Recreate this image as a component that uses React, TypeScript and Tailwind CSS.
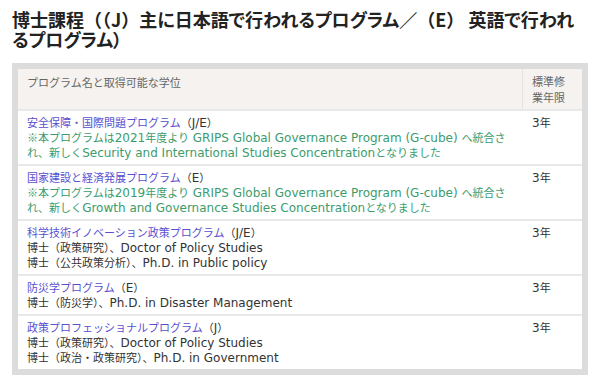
import React from 'react';

type Row = {
  name: string;
  tag: string;
  note?: string;
  degrees?: string[];
  years: string;
};

const rows: Row[] = [
  {
    name: '安全保障・国際問題プログラム',
    tag: '（J/E）',
    note: '※本プログラムは2021年度より GRIPS Global Governance Program (G-cube) へ統合され、新しくSecurity and International Studies Concentrationとなりました',
    years: '3年',
  },
  {
    name: '国家建設と経済発展プログラム',
    tag: '（E）',
    note: '※本プログラムは2019年度より GRIPS Global Governance Program (G-cube) へ統合され、新しくGrowth and Governance Studies Concentrationとなりました',
    years: '3年',
  },
  {
    name: '科学技術イノベーション政策プログラム',
    tag: '（J/E）',
    degrees: ['博士（政策研究）、Doctor of Policy Studies', '博士（公共政策分析）、Ph.D. in Public policy'],
    years: '3年',
  },
  {
    name: '防災学プログラム',
    tag: '（E）',
    degrees: ['博士（防災学）、Ph.D. in Disaster Management'],
    years: '3年',
  },
  {
    name: '政策プロフェッショナルプログラム',
    tag: '（J）',
    degrees: ['博士（政策研究）、Doctor of Policy Studies', '博士（政治・政策研究）、Ph.D. in Government'],
    years: '3年',
  },
];

// latin runs render a touch larger than the kana/kanji, like the original page
const Mixed: React.FC<{ text: string }> = ({ text }) => {
  const parts = text.split(/([\x20-\x7E]+)/).filter(Boolean);
  return (
    <>
      {parts.map((p, i) =>
        /^[\x20-\x7E]+$/.test(p) ? (
          <span key={i} className="[font-family:'DejaVu_Sans',sans-serif] text-[12px] leading-[13px]">
            {p}
          </span>
        ) : (
          <React.Fragment key={i}>{p}</React.Fragment>
        )
      )}
    </>
  );
};

const App: React.FC = () => {
  return (
    <div className="w-[600px] h-[382px] bg-white px-3 pt-[9px] [font-family:'Noto_Sans_CJK_JP',sans-serif] text-[#333]">
      <h1 className="text-[18px] leading-[20px] font-bold text-[#222] [font-feature-settings:'palt']">
        博士課程<span className="[font-feature-settings:normal]">（（</span>J
        <span className="[font-feature-settings:normal]">）</span>主に日本語で行われるプログラム
        <span className="[font-feature-settings:normal]">／（</span>E
        <span className="[font-feature-settings:normal]">）</span> 英語で行われ
        <br />
        るプログラム）
      </h1>

      {/* table */}
      <div className="mt-[14px] bg-[#dcdcdc] p-[6px]">
        <div className="flex bg-[#f5f2ef] text-[11px] leading-4 text-[#666]">
          <div className="flex-1 pl-[9px] pt-[5px] border-r border-[#e6e2de]">
            プログラム名と取得可能な学位
          </div>
          <div className="w-[59px] pl-[9px] pr-2 pt-[4px] pb-[4px]">標準修業年限</div>
        </div>

        {rows.map((r) => (
          <div key={r.name} className="flex bg-white border-t-2 border-[#e8e8e8] text-[11px] leading-[15px]">
            <div className="flex-1 pl-[9px] pr-2 pt-[4px] pb-[4px]">
              <div>
                <span className="text-[#5a4fcf]">{r.name}</span>
                <span>
                  <Mixed text={r.tag} />
                </span>
              </div>
              {r.note && (
                <div className="text-[#3c9c6c]">
                  <Mixed text={r.note} />
                </div>
              )}
              {r.degrees?.map((d) => (
                <div key={d}>
                  <Mixed text={d} />
                </div>
              ))}
            </div>
            <div className="w-[59px] pl-[9px] pt-[4px]">
              <Mixed text={r.years} />
            </div>
          </div>
        ))}
      </div>
    </div>
  );
};

export default App;
